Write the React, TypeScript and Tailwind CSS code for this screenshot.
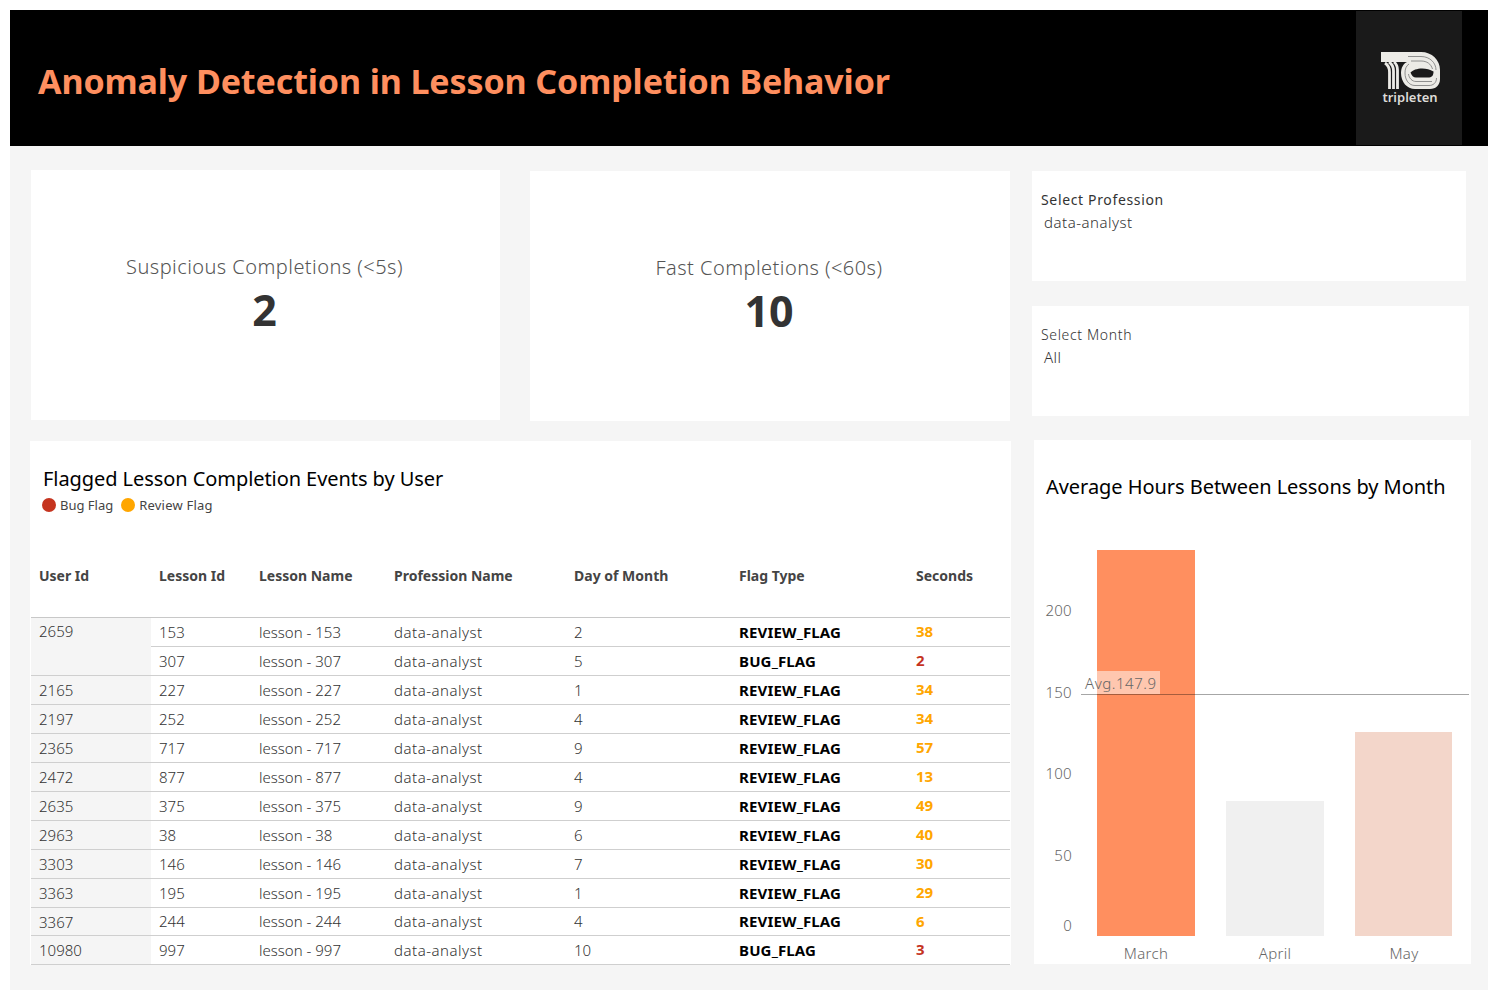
import React from 'react';

const FONT = '"Noto Sans", "Open Sans", sans-serif';

type Row = { user?: string; span?: number; id: string; day: string; flag: string; secs: string };

const ROWS: Row[] = [
  { user: '2659', span: 2, id: '153', day: '2', flag: 'REVIEW_FLAG', secs: '38' },
  { id: '307', day: '5', flag: 'BUG_FLAG', secs: '2' },
  { user: '2165', id: '227', day: '1', flag: 'REVIEW_FLAG', secs: '34' },
  { user: '2197', id: '252', day: '4', flag: 'REVIEW_FLAG', secs: '34' },
  { user: '2365', id: '717', day: '9', flag: 'REVIEW_FLAG', secs: '57' },
  { user: '2472', id: '877', day: '4', flag: 'REVIEW_FLAG', secs: '13' },
  { user: '2635', id: '375', day: '9', flag: 'REVIEW_FLAG', secs: '49' },
  { user: '2963', id: '38', day: '6', flag: 'REVIEW_FLAG', secs: '40' },
  { user: '3303', id: '146', day: '7', flag: 'REVIEW_FLAG', secs: '30' },
  { user: '3363', id: '195', day: '1', flag: 'REVIEW_FLAG', secs: '29' },
  { user: '3367', id: '244', day: '4', flag: 'REVIEW_FLAG', secs: '6' },
  { user: '10980', id: '997', day: '10', flag: 'BUG_FLAG', secs: '3' },
];

const HEADERS = ['User Id', 'Lesson Id', 'Lesson Name', 'Profession Name', 'Day of Month', 'Flag Type', 'Seconds'];

const Logo = () => (
  <div className="flex flex-col items-center pl-[2px]">
    <svg width="59" height="37" viewBox="0 0 59 37" fill="none">
      {/* the 1 */}
      <path d="M0 0H26V10H0Z" fill="#ecebe6" />
      <g stroke="#ecebe6" strokeWidth="2.800">
        <path d="M8.500 37V20C8.500 16 7 13 4 11" />
        <path d="M12.500 37V19C12.500 15 11 12 8 10" />
        <path d="M16.500 37V18C16.500 14 15.500 12 13 10" />
      </g>
      {/* the 0: solid body, thin stripes, dark lens in the middle */}
      <path d="M26 0H40C51 0 59 8 59 18V27C59 33 55 37 49 37H34C26 37 20 30 20 21C20 16 22 12 26 10Z" fill="#ecebe6" />
      <g stroke="#777777" strokeWidth="0.800">
        <path d="M27 4.500H40C49 4.500 55 11 55 18" />
        <path d="M30 9H40C46 9 50 12 51.500 17" />
        <path d="M55.500 26C55.500 31 52 33.500 48 33.500H34C28 33.500 24 28 24 21C24 17 25 14 28 12" />
        <path d="M51 29.500H35C31 29.500 28 26 27.500 22" />
      </g>
      <path d="M29.500 20.500C33 16 45 14.500 52.500 19.500C52.500 24 50.500 25.500 47 25.500H35C32.500 25.500 30.500 23.500 29.500 20.500Z" fill="#1a1a1a" />
    </svg>
    <span className="mt-[1px] text-[13px] leading-[14px] font-semibold text-[#dddcd8]">tripleten</span>
  </div>
);

const KpiCard = ({ label, value, className }: { label: string; value: string; className: string }) => (
  <div className={`bg-white flex flex-col items-center pt-[84px] pr-[2px] ${className}`}>
    <div className="text-[20px] leading-[26px] font-light tracking-[0.45px] text-[#555555]">{label}</div>
    <div className="text-[43px] leading-[58px] font-bold text-[#333333] mt-[1px]">{value}</div>
  </div>
);

const FilterCard = ({ label, value, className, labelClass }: { label: string; value: string; className: string; labelClass: string }) => (
  <div className={`bg-white h-[110px] pl-[9px] pt-[19px] ${className}`}>
    <div className={`text-[14px] leading-[20px] tracking-[0.65px] text-[#333333] ${labelClass}`}>{label}</div>
    <div className="pl-[3px] mt-[2px] text-[15px] leading-[20px] font-light tracking-[0.5px] text-[#333333]">{value}</div>
  </div>
);

const FlagTable = () => (
  <table className="table-fixed border-collapse w-[979px] ml-[1px]">
    <colgroup>
      <col className="w-[120px]" />
      <col className="w-[100px]" />
      <col className="w-[135px]" />
      <col className="w-[180px]" />
      <col className="w-[165px]" />
      <col className="w-[177px]" />
      <col className="w-[102px]" />
    </colgroup>
    <thead>
      <tr className="h-[84px] border-b border-[#c8c8c8]">
        {HEADERS.map(h => (
          <th key={h} className="pl-[8px] pt-[2px] text-left text-[14px] font-bold text-[#444444]">{h}</th>
        ))}
      </tr>
    </thead>
    <tbody className="text-[15px] font-light text-[#333333]">
      {ROWS.map(r => (
        <tr key={r.id} className={`border-b border-[#cfcfcf] ${r.id === '244' ? 'h-[28px]' : 'h-[29px]'}`}>
          {r.user && (
            <td rowSpan={r.span} className={`pl-[8px] align-top bg-[#f5f5f5] leading-[20px] ${r.span ? 'pt-[3px]' : 'pt-[4px]'}`}>{r.user}</td>
          )}
          <td className="pl-[8px] pt-[1px]">{r.id}</td>
          <td className="pl-[8px] pt-[1px]">lesson - {r.id}</td>
          <td className="pl-[8px] pt-[1px] tracking-[0.5px]">data-analyst</td>
          <td className="pl-[8px] pt-[1px]">{r.day}</td>
          <td className="pl-[8px] pt-[1px] text-[15px] font-bold tracking-[0.15px] text-black">{r.flag}</td>
          <td className={`pl-[8px] text-[15px] font-bold ${r.flag === 'BUG_FLAG' ? 'text-[#c5341f]' : 'text-[#ffa600]'}`}>{r.secs}</td>
        </tr>
      ))}
    </tbody>
  </table>
);

const AvgChart = () => (
  <svg width="437" height="524" viewBox="1034 440 437 524" className="block absolute inset-0" fontFamily={FONT}>
    <rect x="1097" y="550" width="98" height="386" fill="#ff8f5f" />
    <rect x="1226" y="801" width="98" height="135" fill="#f0f0f0" />
    <rect x="1355" y="732" width="97" height="204" fill="#f3d6ca" />
    <rect x="1097" y="671" width="63" height="23" fill="#ffffff" fillOpacity="0.5" />
    <rect x="1081" y="694" width="388" height="1" fill="#000000" fillOpacity="0.35" />
    <g fontSize="15" fontWeight="300" fill="#666666" letterSpacing="0.3">
      <text x="1085" y="689" letterSpacing="0.55">Avg.147.9</text>
      <g textAnchor="end">
        <text x="1072" y="616">200</text>
        <text x="1072" y="698">150</text>
        <text x="1072" y="779">100</text>
        <text x="1072" y="861">50</text>
        <text x="1072" y="931">0</text>
      </g>
      <g textAnchor="middle">
        <text x="1146" y="959">March</text>
        <text x="1275" y="959">April</text>
        <text x="1404" y="959">May</text>
      </g>
    </g>
  </svg>
);

export default function App() {
  return (
    <div className="min-h-[999px] bg-white p-[10px]" style={{ fontFamily: FONT }}>
      <div className="w-[1478px] h-[980px] bg-[#f5f5f5]">
        <header className="h-[136px] bg-black flex items-center justify-between pl-[28px] pr-[26px]">
          <h1 className="text-[34px] font-bold tracking-[-0.11px] text-[#ff8f5f] mt-[6px]">Anomaly Detection in Lesson Completion Behavior</h1>
          <div className="w-[106px] h-[134px] bg-[#1a1a1a] flex items-center justify-center">
            <Logo />
          </div>
        </header>

        <div className="flex items-start pt-[24px]">
          <KpiCard label="Suspicious Completions (<5s)" value="2" className="w-[469px] h-[250px] ml-[21px]" />
          <KpiCard label="Fast Completions (<60s)" value="10" className="w-[480px] h-[250px] ml-[30px] mt-[1px]" />
          <div className="ml-[22px] mt-[1px] flex flex-col gap-[25px]">
            <FilterCard label="Select Profession" value="data-analyst" className="w-[434px]" labelClass="font-normal" />
            <FilterCard label="Select Month" value="All" className="w-[437px]" labelClass="font-light" />
          </div>
        </div>

        <div className="flex items-start mt-[20px] ml-[20px]">
          <div className="w-[981px] bg-white">
            <div className="h-[92px] pl-[13px] pt-[24px]">
              <div className="text-[20px] leading-[27px] tracking-[-0.07px] text-black">Flagged Lesson Completion Events by User</div>
              <div className="flex items-center mt-[4px] text-[13px] leading-[18px] text-[#444444]">
                <span className="w-[14px] h-[14px] rounded-full bg-[#c5341f] -ml-[1px]" />
                <span className="ml-[4px]">Bug Flag</span>
                <span className="w-[14px] h-[14px] rounded-full bg-[#ffa600] ml-[8px]" />
                <span className="ml-[4px] tracking-[0.2px]">Review Flag</span>
              </div>
            </div>
            <FlagTable />
          </div>
          <div className="relative w-[437px] h-[524px] ml-[23px] -mt-[1px] bg-white">
            <div className="pl-[12px] pt-[33px] text-[20px] leading-[27px] tracking-[-0.05px] text-black">Average Hours Between Lessons by Month</div>
            <AvgChart />
          </div>
        </div>
      </div>
    </div>
  );
}
